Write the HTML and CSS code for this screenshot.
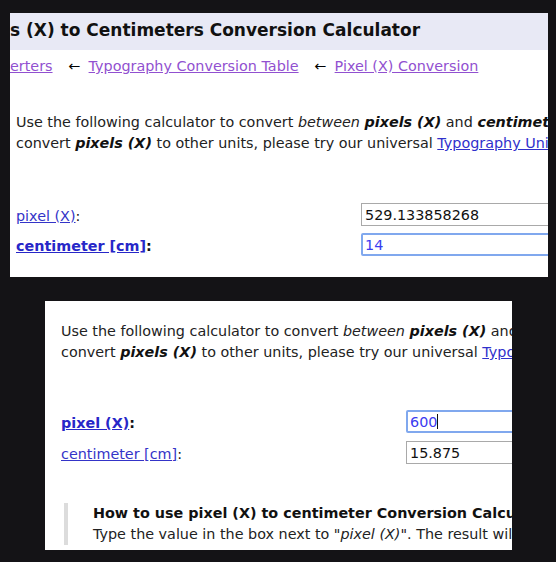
FILE: index.html
```html
<!DOCTYPE html>
<html lang="en">
<head>
<meta charset="utf-8">
<title>Pixels (X) to Centimeters Conversion Calculator</title>
<link rel="stylesheet" href="styles.css">
</head>
<body>
<section class="shot shot-a">
  <header class="titlebar"><h1>s (X) to Centimeters Conversion Calculator</h1></header>
  <nav class="crumbs">
    <a href="#">erters</a><span class="arr">←</span><a href="#">Typography Conversion Table</a><span class="arr">←</span><a href="#">Pixel (X) Conversion</a>
  </nav>
  <p class="intro">Use the following calculator to convert <em>between</em> <b><i>pixels (X)</i></b> and <b><i>centimeters [cm]</i></b>. If you want to<br>convert <b><i>pixels (X)</i></b> to other units, please try our universal <a class="blue" href="#">Typography Unit Converter</a>.</p>
  <div class="form">
    <label class="lbl"><a class="unit" href="#">pixel (X)</a>:</label>
    <span class="field"><input type="text" value="529.133858268" readonly></span>
    <label class="lbl strong"><a class="unit" href="#">centimeter [cm]</a>:</label>
    <span class="field"><input class="focus" type="text" value="14" readonly></span>
  </div>
</section>
<section class="shot shot-b">
  <p class="intro">Use the following calculator to convert <em>between</em> <b><i>pixels (X)</i></b> and <b><i>centimeters [cm]</i></b>. If you want to<br>convert <b><i>pixels (X)</i></b> to other units, please try our universal <a class="blue" href="#">Typography Unit Converter</a>.</p>
  <div class="form">
    <label class="lbl strong"><a class="unit" href="#">pixel (X)</a>:</label>
    <span class="field"><input class="focus" type="text" value="600" readonly><span class="caret"></span></span>
    <label class="lbl"><a class="unit" href="#">centimeter [cm]</a>:</label>
    <span class="field"><input type="text" value="15.875" readonly></span>
  </div>
  <blockquote class="howto">
    <h3>How to use pixel (X) to centimeter Conversion Calculator</h3>
    <p>Type the value in the box next to "<i>pixel (X)</i>". The result will appear in the box next to "<i>centimeter [cm]</i>".</p>
  </blockquote>
</section>
</body>
</html>
```
FILE: styles.css
```css
html, body {
  margin: 0;
  padding: 0;
}
body {
  background: #141316;
  font-family: "DejaVu Sans", Verdana, sans-serif;
  font-size: 14.35px;
  color: #222;
  padding-top: 13px;
}
.shot {
  background: #fff;
  overflow: hidden;
  box-sizing: border-box;
}
.shot-a {
  margin-left: 10px;
  width: 538px;
  height: 264px;
}
.shot-b {
  margin: 24px 0 0 45px;
  width: 467px;
  height: 249px;
  padding-top: 20px;
}
.titlebar {
  height: 37px;
  background: #e8e9f5;
  display: flex;
  align-items: center;
  padding-bottom: 3px;
  box-sizing: border-box;
}
.titlebar h1 {
  margin: 0;
  font-size: 17px;
  font-weight: bold;
  color: #111;
  white-space: nowrap;
}
.crumbs {
  margin-top: 6px;
  line-height: 21px;
  white-space: nowrap;
  display: flex;
}
.crumbs a {
  color: #9150d0;
}
.arr {
  margin: 0 8px 0 16px;
  color: #000;
}
.intro {
  margin: 35px 0 0;
  padding-left: 6px;
  line-height: 21px;
  white-space: nowrap;
  color: #222;
}
.shot-b .intro {
  margin-top: 0;
  padding-left: 16px;
}
.intro b {
  color: #111;
}
.blue {
  color: #3030cc;
}
.form {
  display: grid;
  grid-template-columns: 345px 320px;
  grid-auto-rows: 23px;
  row-gap: 7px;
  margin-top: 49px;
  padding-left: 6px;
  align-items: center;
}
.shot-b .form {
  padding-left: 16px;
  margin-top: 47px;
  row-gap: 8px;
}
.lbl {
  height: 23px;
  box-sizing: border-box;
  line-height: 21px;
  padding-top: 3px;
  white-space: nowrap;
  color: #111;
}
.lbl.strong {
  font-weight: bold;
}
.unit {
  color: #3434c8;
}
.strong .unit {
  color: #2727c8;
}
.field {
  position: relative;
  display: block;
}
.field input {
  display: block;
  width: 320px;
  height: 23px;
  box-sizing: border-box;
  margin: 0;
  border: 1px solid #a9a9a9;
  padding: 0 3px;
  font-family: "DejaVu Sans", Verdana, sans-serif;
  font-size: 14.35px;
  color: #111;
  background: #fff;
  outline: none;
}
.field input.focus {
  border: 2px solid #80a8ee;
  border-radius: 2px;
  padding: 0 2px;
  color: #3b3bf0;
}
.caret {
  position: absolute;
  left: 31px;
  top: 4px;
  width: 1px;
  height: 15px;
  background: #111;
}
.howto {
  margin: 39px 0 0 19px;
  border-left: 4px solid #dcdcdc;
  padding-left: 25px;
  line-height: 21px;
  white-space: nowrap;
}
.howto h3 {
  margin: 0;
  font-size: 14.35px;
  font-weight: bold;
  color: #111;
}
.howto p {
  margin: 0;
}
```
